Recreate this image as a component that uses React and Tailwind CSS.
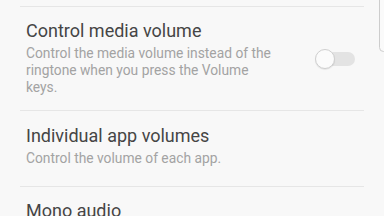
import React from "react";

function Divider() {
  return <div className="ml-[20px] mr-[20px] h-px bg-[#e6e6e6]" />;
}

export default function App() {
  return (
    <div
      className="relative w-[384px] h-[216px] overflow-hidden bg-[#f8f8f8]"
      style={{ fontFamily: "Roboto, 'Noto Sans', sans-serif" }}
    >
      <div className="h-[6px]" />
      <Divider />
      <div className="flex items-start pl-[26px] pr-[29px] pt-[13px] pb-[14px]">
        <div className="flex-1">
          <div className="text-[18px] leading-[22px] text-[#454545]">Control media volume</div>
          <div className="mt-[3px] text-[13.8px] leading-[17px] text-[#a3a3a3] w-[252px]">
            Control the media volume instead of the ringtone when you press the Volume keys.
          </div>
        </div>
        <div className="relative mt-[29px] w-[40px] h-[20px]">
          <div className="absolute left-[3px] top-[3px] w-[37px] h-[14px] rounded-full bg-[#e3e3e3]" />
          <div className="absolute left-0 top-0 w-[20px] h-[20px] rounded-full bg-[#fbfbfb] border border-[#cfcfcf] shadow-[0_1px_1px_rgba(0,0,0,0.08)]" />
        </div>
      </div>
      <Divider />
      <div className="pl-[26px] pt-[14px] pb-[19px]">
        <div className="text-[18px] leading-[22px] text-[#454545]">Individual app volumes</div>
        <div className="mt-[3px] text-[13.8px] leading-[17px] text-[#a3a3a3]">
          Control the volume of each app.
        </div>
      </div>
      <Divider />
      <div className="pl-[26px] pt-[13px]">
        <div className="text-[18px] leading-[22px] text-[#454545]">Mono audio</div>
      </div>
      <div className="absolute right-[-4px] top-[-6px] w-[9px] h-[58px] rounded-[5px] border border-[#cdcdcd] bg-[#fafafa]" />
    </div>
  );
}
